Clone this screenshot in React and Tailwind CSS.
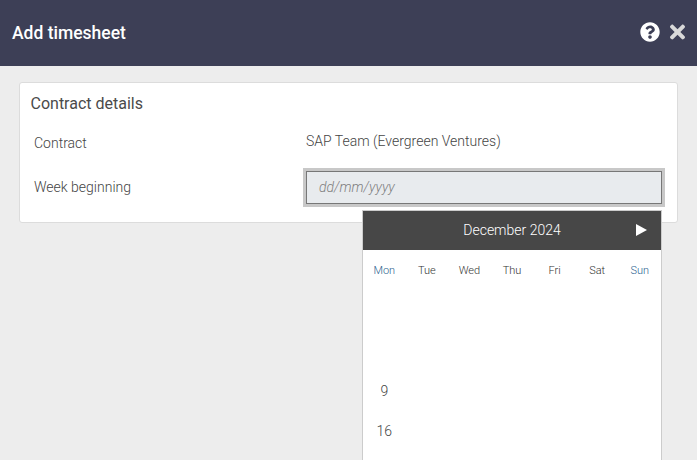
import React from 'react';

const days = ['Mon', 'Tue', 'Wed', 'Thu', 'Fri', 'Sat', 'Sun'];

const App = () => {
  return (
    <div className="relative h-[460px] w-[697px] overflow-hidden bg-[#ededed] font-['Roboto',sans-serif] font-light">
      {/* Header */}
      <div className="flex h-[66px] items-center justify-between bg-[#3d3f56] pl-3 pr-3">
        <h1 className="text-[17.5px] font-medium text-white">Add timesheet</h1>
        <div className="flex items-center gap-[10px] pb-[2px]">
          <svg width="20" height="20" viewBox="0 0 512 512" fill="#ffffff">
            <path d="M504 256c0 136.997-111.043 248-248 248S8 392.997 8 256C8 119.083 119.043 8 256 8s248 111.083 248 248zM262.655 90c-54.497 0-89.255 22.957-116.549 63.758-3.536 5.286-2.353 12.415 2.715 16.258l34.699 26.31c5.205 3.947 12.621 3.008 16.665-2.122 17.864-22.658 30.113-35.797 57.303-35.797 20.429 0 45.698 13.148 45.698 32.958 0 14.976-12.363 22.667-32.534 33.976C247.128 238.528 216 254.941 216 296v4c0 6.627 5.373 12 12 12h56c6.627 0 12-5.373 12-12v-1.333c0-28.462 83.186-29.647 83.186-106.667 0-58.002-60.165-102-116.531-102zM256 338c-25.365 0-46 20.635-46 46 0 25.364 20.635 46 46 46s46-20.636 46-46c0-25.365-20.635-46-46-46z" />
          </svg>
          <svg width="15" height="22" viewBox="0 0 352 512" fill="#d9d9d9">
            <path d="M242.72 256l100.07-100.07c12.28-12.28 12.28-32.19 0-44.48l-22.24-22.24c-12.28-12.28-32.19-12.28-44.48 0L176 189.28 75.93 89.21c-12.28-12.28-32.19-12.28-44.48 0L9.21 111.45c-12.28 12.28-12.28 32.19 0 44.48L109.28 256 9.21 356.07c-12.28 12.28-12.28 32.19 0 44.48l22.24 22.24c12.28 12.28 32.2 12.28 44.48 0L176 322.72l100.07 100.07c12.28 12.28 32.2 12.28 44.48 0l22.24-22.24c12.28-12.28 12.28-32.19 0-44.48L242.72 256z" />
          </svg>
        </div>
      </div>

      {/* Contract details */}
      <div className="ml-[19px] mt-4 h-[141px] w-[659px] rounded-[3px] border border-[#dcdcdc] bg-white pl-[10.5px] pr-[12px] pt-[10px]">
        <h2 className="text-[16px] font-normal leading-[22px] text-[#4a4a4a]">Contract details</h2>
        <div className="mt-[13px] flex h-[30px] items-center">
          <span className="w-[272.5px] pl-[3.5px] text-[14px] text-[#444444]">Contract</span>
          <span className="pb-1 pl-[3px] text-[14px] text-[#444444]">SAP Team (Evergreen Ventures)</span>
        </div>
        <div className="mt-[10px] flex items-center">
          <span className="w-[272.5px] pl-[3.5px] text-[14px] text-[#444444]">Week beginning</span>
          <div className="h-[39px] w-[362px] border-[3px] border-[#c8c8c8]">
            <div className="flex h-full items-center border border-[#777777] bg-[#e8ebee] pl-3 text-[14px] italic text-[#7f7f7f]">
              dd/mm/yyyy
            </div>
          </div>
        </div>
      </div>

      {/* Date picker overlay */}
      <div className="absolute left-[362px] top-[210px] w-[300px] border-x border-t border-[#cccccc] bg-white">
        <div className="relative flex h-[39px] items-center justify-center bg-[#474747] text-[14px] text-white">
          December 2024
          <svg className="absolute right-[14px] top-[13px]" width="11" height="12" viewBox="0 0 11 12" fill="#ffffff">
            <path d="M0 0L11 6L0 12Z" />
          </svg>
        </div>
        <div className="grid h-[250px] grid-cols-7 content-start pt-[14px]">
          {days.map((day) => (
            <div
              key={day}
              className={`text-center text-[11px] leading-[13px] ${day === 'Mon' || day === 'Sun' ? 'text-[#2a5f8f]' : 'text-[#333333]'}`}
            >
              {day}
            </div>
          ))}
          <div className="col-span-7 h-[94px]" />
          <div className="flex h-[40px] items-center justify-center text-[14px] text-[#444444]">9</div>
          <div className="col-span-6" />
          <div className="flex h-[40px] items-center justify-center text-[14px] text-[#444444]">16</div>
        </div>
      </div>
    </div>
  );
};

export default App;
